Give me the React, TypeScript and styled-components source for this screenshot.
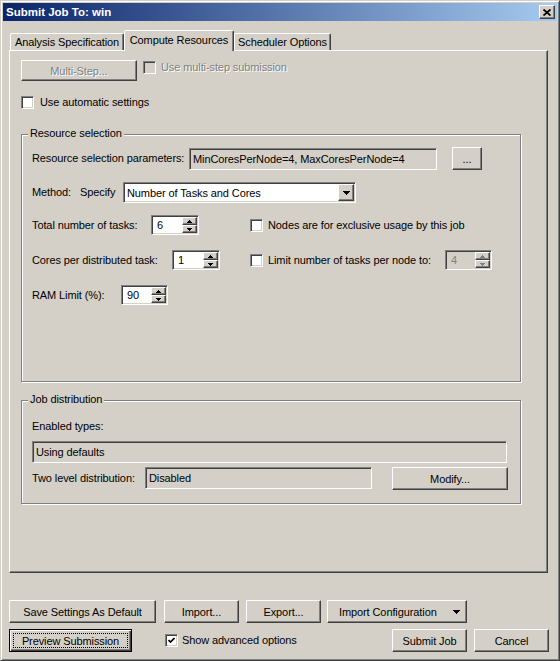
import React from "react";
import styled, { createGlobalStyle } from "styled-components";

const GlobalStyle = createGlobalStyle`
  html, body { margin: 0; padding: 0; background: #d4d0c8; }
  body {
    font-family: "Liberation Sans", Arial, sans-serif;
    font-size: 11px;
    letter-spacing: -0.1px;
    color: #000;
  }
  * { box-sizing: border-box; }
`;

const raised = `
  border: 1px solid;
  border-color: #fff #404040 #404040 #fff;
  box-shadow: inset -1px -1px #808080;
  background: #d4d0c8;
`;

const sunken = `
  border: 1px solid;
  border-color: #808080 #fff #fff #808080;
  box-shadow: inset 1px 1px #404040, inset -1px -1px #d4d0c8;
`;

const Window = styled.div`
  width: 560px;
  height: 661px;
  border: 1px solid;
  border-color: #d4d0c8 #404040 #404040 #d4d0c8;
  box-shadow: inset 1px 1px #fff, inset -1px -1px #808080;
  padding: 2px;
  display: flex;
  flex-direction: column;
`;

const TitleBar = styled.div`
  height: 18px;
  display: flex;
  align-items: center;
  justify-content: space-between;
  padding: 0 2px 0 3px;
  background: linear-gradient(to right, #0a246a, #a6caf0);
  color: #fff;
  font-weight: bold;
  font-size: 11.5px;
  letter-spacing: 0;
`;

const CloseBtn = styled.div`
  width: 16px;
  height: 14px;
  ${raised}
  display: flex;
  align-items: center;
  justify-content: center;
`;

const Body = styled.div`
  padding: 9px 9px 0 6px;
`;

const TabStrip = styled.div`
  height: 20px;
  display: flex;
  align-items: flex-end;
  padding-left: 1px;
`;

const Tab = styled.div<{ $w: number; $active?: boolean }>`
  width: ${p => p.$w}px;
  height: ${p => (p.$active ? 21 : 17)}px;
  margin-bottom: ${p => (p.$active ? -1 : 0)}px;
  position: relative;
  z-index: ${p => (p.$active ? 1 : 0)};
  background: #d4d0c8;
  border: 1px solid;
  border-bottom: none;
  border-color: #fff #404040 transparent #fff;
  border-radius: 2px 2px 0 0;
  box-shadow: inset -1px 0 #808080;
  display: flex;
  align-items: center;
  justify-content: center;
  padding-bottom: ${p => (p.$active ? 2 : 0)}px;
`;

const Panel = styled.div`
  width: 539px;
  height: 523px;
  border: 1px solid;
  border-color: #fff #404040 #404040 #fff;
  box-shadow: inset -1px -1px #808080;
  padding: 9px 0 0 11px;
`;

const Row = styled.div<{ $mt?: number; $h?: number; $align?: string }>`
  display: flex;
  align-items: ${p => p.$align ?? "center"};
  margin-top: ${p => p.$mt ?? 0}px;
  height: ${p => p.$h ?? 20}px;
`;

const Label = styled.span<{ $w?: number; $dim?: boolean }>`
  display: inline-block;
  flex: none;
  width: ${p => (p.$w ? `${p.$w}px` : "auto")};
  white-space: nowrap;
  line-height: 13px;
  color: ${p => (p.$dim ? "#808080" : "#000")};
  text-shadow: ${p => (p.$dim ? "1px 1px #fff" : "none")};
`;

const Button = styled.button<{ $w: number; $h?: number; $ml?: number; $dim?: boolean; $default?: boolean }>`
  flex: none;
  width: ${p => p.$w}px;
  height: ${p => p.$h ?? 23}px;
  margin-left: ${p => p.$ml ?? 0}px;
  ${raised}
  padding: 0;
  font: inherit;
  letter-spacing: inherit;
  color: ${p => (p.$dim ? "#808080" : "#000")};
  text-shadow: ${p => (p.$dim ? "1px 1px #fff" : "none")};
  display: flex;
  align-items: center;
  justify-content: center;
  ${p =>
    p.$default
      ? `
    border: 1px solid #000;
    box-shadow: inset 1px 1px #fff, inset -1px -1px #404040, inset -2px -2px #808080;
    outline: 1px dotted #000;
    outline-offset: -5px;
  `
      : ""}
`;

const SplitButton = styled(Button)`
  justify-content: space-between;
  padding: 0 6px 0 11px;
`;

const Check = styled.span<{ $dim?: boolean }>`
  flex: none;
  width: 13px;
  height: 13px;
  ${sunken}
  background: ${p => (p.$dim ? "#d4d0c8" : "#fff")};
  display: flex;
  align-items: center;
  justify-content: center;
`;

const CheckField = styled.label<{ $gap?: number; $mt?: number }>`
  display: inline-flex;
  align-items: center;
  gap: ${p => p.$gap ?? 5}px;
  margin-top: ${p => p.$mt ?? 0}px;
`;

const Group = styled.div<{ $h: number; $mt: number; $pt: number }>`
  position: relative;
  width: 500px;
  height: ${p => p.$h}px;
  margin-top: ${p => p.$mt}px;
  border: 1px solid #808080;
  box-shadow: inset 1px 1px #fff, 1px 1px #fff;
  padding: ${p => p.$pt}px 0 0 10px;
`;

const Legend = styled.span`
  position: absolute;
  top: -8px;
  left: 6px;
  padding: 0 2px;
  line-height: 13px;
  background: #d4d0c8;
`;

const Field = styled.div<{ $w: number; $white?: boolean; $mt?: number }>`
  flex: none;
  width: ${p => p.$w}px;
  height: 22px;
  margin-top: ${p => p.$mt ?? 0}px;
  ${sunken}
  background: ${p => (p.$white ? "#fff" : "#d4d0c8")};
  display: flex;
  align-items: center;
  padding: 0 3px;
  white-space: nowrap;
  overflow: hidden;
`;

const Combo = styled.div<{ $w: number }>`
  width: ${p => p.$w}px;
  height: 21px;
  ${sunken}
  background: #fff;
  display: flex;
  align-items: center;
  justify-content: space-between;
  padding: 1px 1px 1px 3px;
`;

const DropBtn = styled.span`
  width: 16px;
  height: 17px;
  ${raised}
  display: flex;
  align-items: center;
  justify-content: center;
`;

const SpinBox = styled.div<{ $w: number; $dim?: boolean }>`
  flex: none;
  width: ${p => p.$w}px;
  height: 20px;
  ${sunken}
  background: ${p => (p.$dim ? "#d4d0c8" : "#fff")};
  color: ${p => (p.$dim ? "#808080" : "#000")};
  display: flex;
  align-items: center;
  justify-content: space-between;
  padding: 1px 1px 1px 5px;
`;

const SpinCol = styled.div`
  width: 15px;
  height: 16px;
  display: flex;
  flex-direction: column;
`;

const SpinHalf = styled.span`
  flex: 1;
  ${raised}
  display: flex;
  align-items: center;
  justify-content: center;
`;

const Cell = styled.div<{ $w: number }>`
  flex: none;
  width: ${p => p.$w}px;
  display: flex;
  align-items: center;
`;

const Footer = styled.div`
  padding: 27px 8px 0 6px;
`;

const Tri = ({ up, color = "#000", w = 7 }: { up?: boolean; color?: string; w?: number }) => {
  const h = Math.ceil(w / 2);
  return (
    <svg width={w} height={h} viewBox={`0 0 ${w} ${h}`} shapeRendering="crispEdges">
      <polygon points={up ? `0,${h} ${w},${h} ${w / 2},0` : `0,0 ${w},0 ${w / 2},${h}`} fill={color} />
    </svg>
  );
};

const Spinner = ({ value, w, dim }: { value: string; w: number; dim?: boolean }) => (
  <SpinBox $w={w} $dim={dim}>
    <span>{value}</span>
    <SpinCol>
      <SpinHalf>
        <Tri up w={5} color={dim ? "#808080" : "#000"} />
      </SpinHalf>
      <SpinHalf>
        <Tri w={5} color={dim ? "#808080" : "#000"} />
      </SpinHalf>
    </SpinCol>
  </SpinBox>
);

const CheckMark = () => (
  <svg width="7" height="7" viewBox="0 0 7 7">
    <polyline points="0.5,3 2.5,5 6.5,1" fill="none" stroke="#000" strokeWidth="1.7" />
  </svg>
);

export default function App() {
  return (
    <>
      <GlobalStyle />
      <Window>
        <TitleBar>
          <span>Submit Job To: win</span>
          <CloseBtn>
            <svg width="8" height="7" viewBox="0 0 8 7">
              <path d="M0.5 0.5 L7.5 6.5 M7.5 0.5 L0.5 6.5" stroke="#000" strokeWidth="1.8" />
            </svg>
          </CloseBtn>
        </TitleBar>
        <Body>
          <TabStrip>
            <Tab $w={114}>Analysis Specification</Tab>
            <Tab $w={110} $active>
              Compute Resources
            </Tab>
            <Tab $w={97}>Scheduler Options</Tab>
          </TabStrip>
          <Panel>
            <Row $h={21} $align="flex-start">
              <Button $w={116} $h={21} $dim>
                Multi-Step...
              </Button>
              <CheckField $gap={5} $mt={1} style={{ marginLeft: 6 }}>
                <Check $dim />
                <Label $dim>Use multi-step submission</Label>
              </CheckField>
            </Row>
            <Row $mt={15} $h={13}>
              <CheckField $gap={6}>
                <Check />
                <Label>Use automatic settings</Label>
              </CheckField>
            </Row>

            <Group $h={248} $mt={25} $pt={12}>
              <Legend>Resource selection</Legend>
              <Row $h={23}>
                <Label $w={157}>Resource selection parameters:</Label>
                <Field $w={248}>MinCoresPerNode=4, MaxCoresPerNode=4</Field>
                <Button $w={30} $ml={15}>
                  ...
                </Button>
              </Row>
              <Row $mt={12} $h={21}>
                <Label $w={48}>Method:</Label>
                <Label $w={43}>Specify</Label>
                <Combo $w={233}>
                  <span>Number of Tasks and Cores</span>
                  <DropBtn>
                    <Tri />
                  </DropBtn>
                </Combo>
              </Row>
              <Row $mt={12}>
                <Cell $w={218}>
                  <Label $w={119}>Total number of tasks:</Label>
                  <Spinner value="6" w={48} />
                </Cell>
                <CheckField $gap={5}>
                  <Check />
                  <Label>Nodes are for exclusive usage by this job</Label>
                </CheckField>
              </Row>
              <Row $mt={15}>
                <Cell $w={218}>
                  <Label $w={140}>Cores per distributed task:</Label>
                  <Spinner value="1" w={48} />
                </Cell>
                <Cell $w={195}>
                  <CheckField $gap={5}>
                    <Check />
                    <Label>Limit number of tasks per node to:</Label>
                  </CheckField>
                </Cell>
                <Spinner value="4" w={47} dim />
              </Row>
              <Row $mt={15}>
                <Label $w={89}>RAM Limit (%):</Label>
                <Spinner value="90" w={47} />
              </Row>
            </Group>

            <Group $h={104} $mt={18} $pt={19}>
              <Legend>Job distribution</Legend>
              <Label>Enabled types:</Label>
              <Field $w={475} $mt={8}>
                Using defaults
              </Field>
              <Row $mt={4} $h={23} $align="flex-start">
                <Cell $w={113} style={{ height: 22 }}>
                  <Label>Two level distribution:</Label>
                </Cell>
                <Field $w={227}>Disabled</Field>
                <Button $w={116} $ml={20}>
                  Modify...
                </Button>
              </Row>
            </Group>
          </Panel>
        </Body>
        <Footer>
          <Row $h={23}>
            <Button $w={147}>Save Settings As Default</Button>
            <Button $w={75} $ml={8}>
              Import...
            </Button>
            <Button $w={75} $ml={7}>
              Export...
            </Button>
            <SplitButton $w={140} $ml={6}>
              <span>Import Configuration</span>
              <Tri />
            </SplitButton>
          </Row>
          <Row $h={23} $mt={6}>
            <Button $w={123} $default>
              Preview Submission
            </Button>
            <CheckField $gap={4} style={{ marginLeft: 33 }}>
              <Check>
                <CheckMark />
              </Check>
              <Label>Show advanced options</Label>
            </CheckField>
            <Button $w={75} style={{ marginLeft: "auto" }}>
              Submit Job
            </Button>
            <Button $w={75} $ml={7}>
              Cancel
            </Button>
          </Row>
        </Footer>
      </Window>
    </>
  );
}
